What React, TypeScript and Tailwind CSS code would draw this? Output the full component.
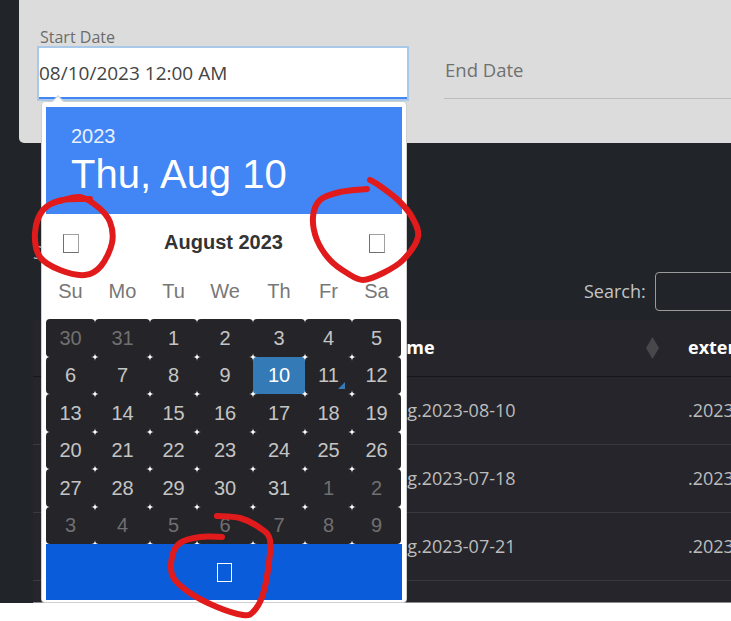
import React from 'react';

type Day = { d: number; muted?: boolean; active?: boolean; today?: boolean };

const weeks: Day[][] = [
  [{ d: 30, muted: true }, { d: 31, muted: true }, { d: 1 }, { d: 2 }, { d: 3 }, { d: 4 }, { d: 5 }],
  [{ d: 6 }, { d: 7 }, { d: 8 }, { d: 9 }, { d: 10, active: true }, { d: 11, today: true }, { d: 12 }],
  [{ d: 13 }, { d: 14 }, { d: 15 }, { d: 16 }, { d: 17 }, { d: 18 }, { d: 19 }],
  [{ d: 20 }, { d: 21 }, { d: 22 }, { d: 23 }, { d: 24 }, { d: 25 }, { d: 26 }],
  [{ d: 27 }, { d: 28 }, { d: 29 }, { d: 30 }, { d: 31 }, { d: 1, muted: true }, { d: 2, muted: true }],
  [3, 4, 5, 6, 7, 8, 9].map((d) => ({ d, muted: true })),
];

const weekdays = ['Su', 'Mo', 'Tu', 'We', 'Th', 'Fr', 'Sa'];

const rows = [
  { name: 'app.log.2023-08-10', ext: '.2023-08-10' },
  { name: 'app.log.2023-07-18', ext: '.2023-07-18' },
  { name: 'app.log.2023-07-21', ext: '.2023-07-21' },
  { name: 'app.log.2023-07-25', ext: '.2023-07-25' },
];

// smooth hand-drawn stroke through points (catmull-rom -> bezier)
function curve(p: [number, number][]) {
  let d = `M${p[0][0]} ${p[0][1]}`;
  for (let i = 0; i < p.length - 1; i++) {
    const p0 = p[i - 1] || p[i];
    const p1 = p[i];
    const p2 = p[i + 1];
    const p3 = p[i + 2] || p2;
    const c1x = p1[0] + (p2[0] - p0[0]) / 6;
    const c1y = p1[1] + (p2[1] - p0[1]) / 6;
    const c2x = p2[0] - (p3[0] - p1[0]) / 6;
    const c2y = p2[1] - (p3[1] - p1[1]) / 6;
    d += ` C${c1x} ${c1y} ${c2x} ${c2y} ${p2[0]} ${p2[1]}`;
  }
  return d;
}

const marks: [number, number][][] = [
  [[90, 199], [62, 200], [43, 210], [35, 233], [40, 257], [60, 270], [85, 275], [101, 266], [112, 243], [110, 222], [98, 207], [80, 197], [60, 201]],
  [[367, 189], [340, 192], [320, 200], [313, 217], [317, 240], [330, 260], [347, 273], [363, 280], [383, 273], [403, 260], [418, 237], [412, 217], [398, 200], [380, 186], [370, 180]],
  [[222, 537], [200, 537], [180, 543], [172, 557], [173, 577], [190, 593], [217, 607], [243, 615], [253, 612], [262, 597], [268, 570], [270, 540], [260, 528], [240, 518], [217, 516]],
];

const Tofu: React.FC<{ light?: boolean }> = ({ light }) => (
  <span
    className={
      light
        ? 'inline-block w-[15px] h-[19px] border border-white'
        : 'inline-block w-[16px] h-[19px] border border-[#a0a0a0] border-l-[#707070] border-b-[#707070]'
    }
  />
);

const DatePicker: React.FC = () => (
  <div className="absolute left-[41px] top-[101px] w-[366px] bg-white border border-[#d0d0d0] rounded-[4px] px-[4px] pt-[5px] pb-[2px] font-['Liberation_Sans',Arial,sans-serif]">
    <div className="absolute -top-[5px] left-[12px] w-[8px] h-[8px] rotate-45 bg-white border-l border-t border-[#d0d0d0]" />

    <div className="h-[107px] bg-[#4285f4] pl-[25px] pt-[18px] text-white">
      <div className="text-[20px] leading-[23px] text-[#e8f0fe]">2023</div>
      <div className="mt-[4px] text-[40px] leading-[44px]">Thu, Aug 10</div>
    </div>

    <div className="grid grid-cols-[49px_55px_47px_56px_52px_47px_49px] h-[56px] items-center">
      <div className="flex justify-center pt-[2px]">
        <Tofu />
      </div>
      <div className="col-span-5 text-center text-[20px] font-bold text-[#333]">August 2023</div>
      <div className="flex justify-center pt-[2px]">
        <Tofu />
      </div>
    </div>

    <div className="grid grid-cols-[49px_55px_47px_56px_52px_47px_49px] h-[41px] items-center">
      {weekdays.map((w) => (
        <div key={w} className="text-center text-[20px] text-[#777]">
          {w}
        </div>
      ))}
    </div>

    <div className="mt-[8px] grid grid-cols-[49px_55px_47px_56px_52px_47px_49px]">
      {weeks.flat().map((c, i) => (
        <div
          key={i}
          className={`relative h-[37.5px] rounded-[4px] flex items-center justify-center text-[20px] ${
            c.active ? 'bg-[#337ab7] text-white' : 'bg-[#252429]'
          } ${c.muted ? 'text-[#707070]' : c.active ? '' : 'text-[#c4c4c4]'}`}
        >
          {c.d}
          {c.today && (
            <span className="absolute bottom-[5px] right-[7px] w-0 h-0 border-l-[7px] border-l-transparent border-b-[7px] border-b-[#337ab7]" />
          )}
        </div>
      ))}
    </div>

    <div className="h-[56px] bg-[#0b5cdb] flex items-center justify-center">
      <Tofu light />
    </div>
  </div>
);

export default function App() {
  return (
    <div className="relative w-[731px] h-[621px] overflow-hidden bg-white font-['Open_Sans',sans-serif]">
      <div className="h-[603px] bg-[#212529]">
        <div className="ml-[19px] h-[143px] bg-[#dcdcdc] rounded-bl-[5px] flex pl-[18px] pt-[24px]">
          <div className="w-[372px] shrink-0">
            <div className="h-[22px] pl-[3px] text-[16px] leading-[26px] text-[#6c6c6c]">Start Date</div>
            <div className="h-[55px] border-2 border-[#a9c9e9] bg-white">
              <div className="h-full flex items-center border-b-2 border-[#4285f4] text-[19px] leading-[26px] text-[#444]">
                08/10/2023 12:00 AM
              </div>
            </div>
          </div>
          <div className="ml-[35px] flex-1">
            <div className="mt-[22px] h-[53px] border-b border-[#bdbdbd] flex items-end pb-[16px] pl-[1px] text-[18.5px] leading-[25px] text-[#707070]">
              End Date
            </div>
          </div>
        </div>

        <div className="pl-[33px]">
          <div className="mt-[97px] h-[25px] text-[18px] leading-[25px] text-[#a9b4c2]">Show</div>
          <div className="mt-[7px] h-[39px] flex items-center pl-[551px]">
            <span className="shrink-0 text-[18px] text-[#c4c4c4]">Search:</span>
            <div className="shrink-0 ml-[9px] w-[160px] h-[39px] rounded-[4px] border border-[#9a9a9a]" />
          </div>
          <div className="mt-[9px] h-[283px] overflow-hidden border-b border-[#8a8a8a] bg-[#25252b]">
            <table className="table-fixed w-[845px] text-[18px] border-collapse">
              <colgroup>
                <col className="w-[309px]" />
                <col className="w-[336px]" />
                <col className="w-[200px]" />
              </colgroup>
              <thead>
                <tr className="h-[56px] border-b border-[#17171a]">
                  <th className="px-[12px] text-left font-bold text-white">Date</th>
                  <th className="px-[10px] text-left font-bold text-white">
                    <div className="flex items-center justify-between">
                      <span>Filename</span>
                      <svg width="13" height="22" viewBox="0 0 13 22" className="mr-[9px]">
                        <polygon points="6.5,0 13,11 6.5,22 0,11" fill="#47474c" />
                      </svg>
                    </div>
                  </th>
                  <th className="px-[10px] text-left font-bold text-white whitespace-nowrap">extension</th>
                </tr>
              </thead>
              <tbody>
                {rows.map((r) => (
                  <tr key={r.name} className="h-[68px] border-b border-[#3a3a3e] text-[#bdbdbd]">
                    <td className="px-[12px]">2023</td>
                    <td className="px-[10px] pl-[13px]">{r.name}</td>
                    <td className="px-[10px] whitespace-nowrap">{r.ext}</td>
                  </tr>
                ))}
              </tbody>
            </table>
          </div>
        </div>
      </div>

      <DatePicker />

      <svg className="absolute inset-0 pointer-events-none" width="731" height="621" viewBox="0 0 731 621">
        {marks.map((m, i) => (
          <path key={i} d={curve(m)} fill="none" stroke="#e11b1b" strokeWidth="6" strokeLinecap="round" strokeLinejoin="round" />
        ))}
      </svg>
    </div>
  );
}
